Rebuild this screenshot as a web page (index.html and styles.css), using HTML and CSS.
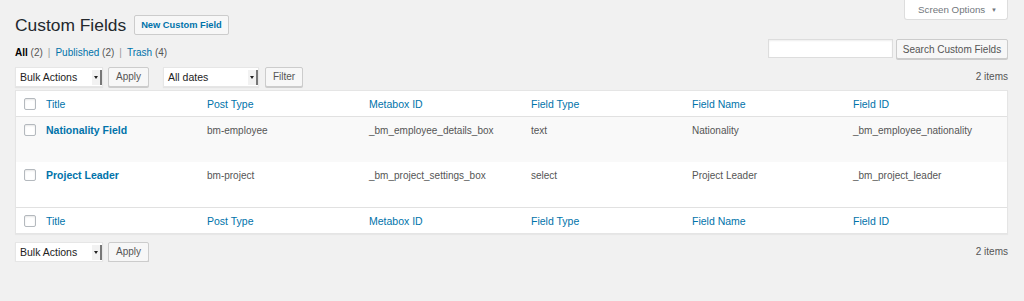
FILE: index.html
```html
<!doctype html>
<html lang="en">
<head>
  <meta charset="UTF-8">
  <title>Custom Fields</title>
  <link rel="stylesheet" href="styles.css">
</head>
<body>
  <div class="wrap">
    <div class="head">
      <div class="title-group">
        <h1>Custom Fields</h1>
        <a class="page-action" href="#">New Custom Field</a>
      </div>
      <div class="screen-options">Screen Options <span class="caret">&#9660;</span></div>
    </div>

    <div class="views-row">
      <ul class="subsubsub">
        <li><b>All</b> <span class="count">(2)</span></li>
        <li class="sep">|</li>
        <li><a href="#">Published</a> <span class="count">(2)</span></li>
        <li class="sep">|</li>
        <li><a href="#">Trash</a> <span class="count">(4)</span></li>
      </ul>
      <div class="search-box">
        <input type="text" class="search-input">
        <button class="btn">Search Custom Fields</button>
      </div>
    </div>

    <div class="tablenav top">
      <div class="actions">
        <div class="select bulk"><span>Bulk Actions</span><i class="arrow"></i></div>
        <button class="btn apply">Apply</button>
        <div class="select dates"><span>All dates</span><i class="arrow"></i></div>
        <button class="btn filter">Filter</button>
      </div>
      <div class="items">2 items</div>
    </div>

    <table class="list">
      <colgroup>
        <col class="c-check">
        <col class="c-title">
        <col class="c-wide">
        <col class="c-wide">
        <col class="c-narrow">
        <col class="c-narrow">
        <col class="c-wide">
      </colgroup>
      <thead>
        <tr>
          <th class="check"><span class="cb"></span></th>
          <th><a href="#">Title</a></th>
          <th><a href="#">Post Type</a></th>
          <th><a href="#">Metabox ID</a></th>
          <th><a href="#">Field Type</a></th>
          <th><a href="#">Field Name</a></th>
          <th><a href="#">Field ID</a></th>
        </tr>
      </thead>
      <tbody>
        <tr class="alt">
          <td class="check"><span class="cb"></span></td>
          <td><a class="row-title" href="#">Nationality Field</a></td>
          <td>bm-employee</td>
          <td>_bm_employee_details_box</td>
          <td>text</td>
          <td>Nationality</td>
          <td>_bm_employee_nationality</td>
        </tr>
        <tr>
          <td class="check"><span class="cb"></span></td>
          <td><a class="row-title" href="#">Project Leader</a></td>
          <td>bm-project</td>
          <td>_bm_project_settings_box</td>
          <td>select</td>
          <td>Project Leader</td>
          <td>_bm_project_leader</td>
        </tr>
      </tbody>
      <tfoot>
        <tr>
          <th class="check"><span class="cb"></span></th>
          <th><a href="#">Title</a></th>
          <th><a href="#">Post Type</a></th>
          <th><a href="#">Metabox ID</a></th>
          <th><a href="#">Field Type</a></th>
          <th><a href="#">Field Name</a></th>
          <th><a href="#">Field ID</a></th>
        </tr>
      </tfoot>
    </table>

    <div class="tablenav bottom">
      <div class="actions">
        <div class="select bulk"><span>Bulk Actions</span><i class="arrow"></i></div>
        <button class="btn apply">Apply</button>
      </div>
      <div class="items">2 items</div>
    </div>
  </div>
</body>
</html>
```

FILE: styles.css
```css
* {
  box-sizing: border-box;
}
body {
  margin: 0;
  background: #f1f1f1;
  font-family: "Liberation Sans", Arial, sans-serif;
  font-size: 9.75px;
  color: #444;
}
a {
  color: #0073aa;
  text-decoration: none;
}
.wrap {
  padding: 0 16px 0 15px;
}

/* heading */
.head {
  display: flex;
  justify-content: space-between;
  align-items: flex-start;
  height: 35px;
}
.title-group {
  display: flex;
  align-items: center;
  gap: 8px;
  padding-top: 15px;
}
.title-group h1 {
  margin: 0;
  font-size: 17.4px;
  font-weight: 400;
  line-height: 20px;
  color: #23282d;
}
.page-action {
  display: block;
  height: 20px;
  line-height: 18px;
  padding: 0 6px;
  border: 1px solid #ccc;
  border-radius: 2px;
  background: #f7f7f7;
  font-size: 9.3px;
  font-weight: bold;
}
.screen-options {
  width: 104px;
  height: 20px;
  line-height: 19px;
  padding-left: 13px;
  background: #fff;
  border: 1px solid #ddd;
  border-top: none;
  border-radius: 0 0 3px 3px;
  color: #72777c;
}
.screen-options .caret {
  font-size: 6px;
  margin-left: 3px;
  vertical-align: 1px;
}

/* views + search */
.views-row {
  display: flex;
  justify-content: space-between;
  align-items: flex-end;
  margin-top: 4px;
}
.subsubsub {
  list-style: none;
  margin: 0;
  padding: 0;
  display: flex;
  gap: 4px;
  line-height: 13px;
  font-size: 10px;
  color: #666;
}
.subsubsub b {
  color: #000;
}
.subsubsub .count {
  color: #555;
}
.subsubsub .sep {
  color: #999;
  padding: 0 1px;
}
.search-box {
  display: flex;
  gap: 3px;
  align-items: flex-start;
}
.search-input {
  width: 125px;
  height: 19px;
  margin: 0;
  border: 1px solid #ddd;
  background: #fff;
  box-shadow: inset 0 1px 2px rgba(0,0,0,0.07);
}
.btn {
  height: 20px;
  margin: 0;
  padding: 0 4px;
  border: 1px solid #ccc;
  border-radius: 2px;
  background: #f7f7f7;
  box-shadow: 0 1px 0 #ccc;
  font-family: inherit;
  font-size: 10px;
  color: #555;
  white-space: nowrap;
}
.search-box .btn {
  width: 112px;
}

/* tablenav */
.tablenav {
  display: flex;
  justify-content: space-between;
  align-items: center;
  height: 21px;
}
.tablenav.top {
  margin-top: 7px;
  margin-bottom: 3px;
}
.tablenav.bottom {
  margin-top: 7px;
}
.actions {
  display: flex;
  align-items: center;
}
.select {
  display: flex;
  align-items: stretch;
  height: 20px;
  background: #fff;
  border: 1px solid #e6e6e6;
  box-shadow: 0 1px 1px rgba(0,0,0,0.05);
  color: #222;
}
.select span {
  flex: 1;
  line-height: 18px;
  padding-left: 4px;
  font-size: 10.5px;
}
.select .arrow {
  position: relative;
  width: 10px;
  margin: 2px 0 1px;
  background: #f2f2f2;
  border-right: 2px solid #777;
}
.select .arrow::after {
  content: '';
  position: absolute;
  left: 2px;
  top: 6px;
  border-left: 2px solid transparent;
  border-right: 2px solid transparent;
  border-top: 3px solid #222;
}
.select.bulk {
  width: 88px;
}
.select.dates {
  width: 96px;
  margin-left: 14px;
}
.btn.apply {
  width: 41px;
  margin-left: 5px;
}
.btn.filter {
  width: 38px;
  margin-left: 6px;
}
.items {
  color: #555;
  font-size: 10px;
}

/* table */
.list {
  width: 100%;
  table-layout: fixed;
  border-collapse: separate;
  border-spacing: 0;
  background: #fff;
  border: 1px solid #e5e5e5;
  box-shadow: 0 1px 1px rgba(0,0,0,0.04);
}
.c-check { width: 22px; }
.c-title { width: 161px; }
.c-wide { width: 162px; }
.c-narrow { width: 161px; }
.list th {
  height: 26px;
  padding: 0 8px;
  text-align: left;
  font-weight: 400;
  font-size: 10.5px;
}
.list thead th {
  border-bottom: 1px solid #e1e1e1;
}
.list tfoot th {
  border-top: 1px solid #e1e1e1;
}
.list td {
  height: 45px;
  padding: 7px 8px 0;
  vertical-align: top;
  color: #555;
  font-size: 10px;
  line-height: 13px;
}
.list tr.alt td {
  background: #f9f9f9;
}
.list .check {
  padding: 0 0 0 8px;
}
.list td.check {
  padding-top: 7px;
}
.row-title {
  font-size: 10.5px;
  font-weight: bold;
}
.cb {
  display: block;
  width: 12px;
  height: 12px;
  border: 1px solid #b4b9be;
  border-radius: 2px;
  background: #fff;
  box-shadow: inset 0 1px 2px rgba(0,0,0,0.1);
}
```
